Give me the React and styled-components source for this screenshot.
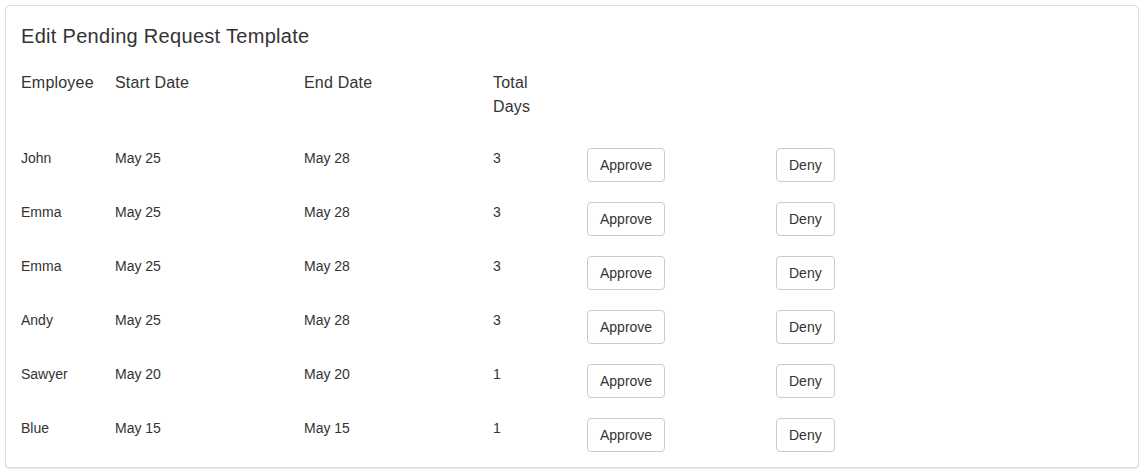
import React from "react";
import styled, { createGlobalStyle } from "styled-components";

const Global = createGlobalStyle`
  html, body { margin: 0; padding: 0; background: #fff; }
  body {
    font-family: "Liberation Sans", Arial, sans-serif;
    color: #333;
    font-size: 14px;
    line-height: 20px;
  }
`;

const Page = styled.div`
  padding: 5px 6px 8px 5px;
`;

const Panel = styled.section`
  border: 1px solid #dddddd;
  border-radius: 4px;
  box-shadow: 0 1px 1px rgba(0, 0, 0, 0.08);
  background: #fff;
  padding: 19px 15px 14px 15px;
  height: 463px;
  box-sizing: border-box;
`;

const Title = styled.h3`
  margin: 0 0 24px 0;
  font-size: 20px;
  line-height: 22px;
  font-weight: 400;
  color: #333;
  letter-spacing: 0.3px;
`;

const Grid = styled.div`
  display: grid;
  grid-template-columns: 94px 189px 189px 94px 189px 1fr;
`;

const HeadCell = styled.div`
  font-size: 16px;
  line-height: 24px;
  letter-spacing: 0.2px;
  padding-bottom: ${(p) => (p.$last ? "29px" : "0")};
  padding-right: 10px;
`;

const HeaderRow = styled.div`
  display: contents;
`;

const Row = styled.div`
  display: contents;
`;

const Cell = styled.div`
  font-size: 14px;
  line-height: 20px;
  height: 54px;
`;

const Button = styled.button`
  font-family: inherit;
  font-size: 14px;
  line-height: 20px;
  color: #333;
  background: #fff;
  border: 1px solid #ccc;
  border-radius: 4px;
  padding: 6px 12px;
  height: 34px;
  cursor: pointer;
`;

const rows = [
  ["John", "May 25", "May 28", "3"],
  ["Emma", "May 25", "May 28", "3"],
  ["Emma", "May 25", "May 28", "3"],
  ["Andy", "May 25", "May 28", "3"],
  ["Sawyer", "May 20", "May 20", "1"],
  ["Blue", "May 15", "May 15", "1"],
];

export default function App() {
  return (
    <>
      <Global />
      <Page>
        <Panel>
          <Title>Edit Pending Request Template</Title>
          <Grid>
            <HeaderRow>
              <HeadCell>Employee</HeadCell>
              <HeadCell>Start Date</HeadCell>
              <HeadCell>End Date</HeadCell>
              <HeadCell $last>
                Total
                <br />
                Days
              </HeadCell>
              <HeadCell />
              <HeadCell />
            </HeaderRow>
            {rows.map((r, i) => (
              <Row key={i}>
                <Cell>{r[0]}</Cell>
                <Cell>{r[1]}</Cell>
                <Cell>{r[2]}</Cell>
                <Cell>{r[3]}</Cell>
                <Cell>
                  <Button>Approve</Button>
                </Cell>
                <Cell>
                  <Button>Deny</Button>
                </Cell>
              </Row>
            ))}
          </Grid>
        </Panel>
      </Page>
    </>
  );
}
